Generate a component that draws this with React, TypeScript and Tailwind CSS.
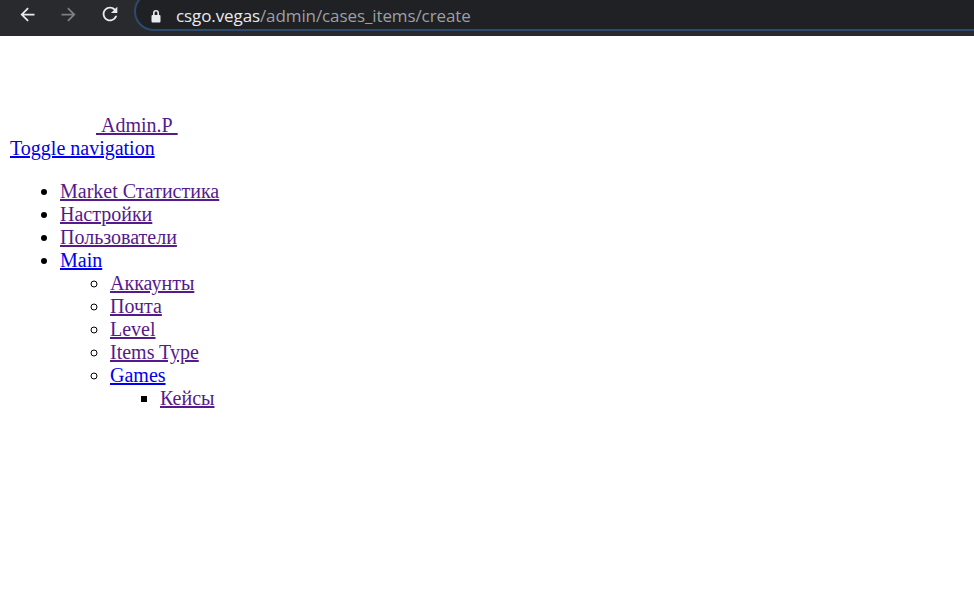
import React from "react";

const serif = { fontFamily: '"Liberation Serif", "Times New Roman", serif' };

function Visited({ children }: { children: React.ReactNode }) {
  return (
    <a href="#" className="text-[#551a8b] underline">
      {children}
    </a>
  );
}
function Link({ children }: { children: React.ReactNode }) {
  return (
    <a href="#" className="text-[#0000ee] underline">
      {children}
    </a>
  );
}

export default function App() {
  return (
    <div className="w-[974px] h-[600px] bg-white overflow-hidden">
      {/* browser toolbar */}
      <div className="relative h-[36px] bg-[#292a2d] flex items-start overflow-hidden">
        <div className="flex items-center h-[28px] pl-[17px] gap-[20px]">
          <svg width="21" height="21" viewBox="0 0 24 24" fill="#e8eaed">
            <path d="M20 11H7.83l5.59-5.59L12 4l-8 8 8 8 1.41-1.41L7.83 13H20v-2z" />
          </svg>
          <svg width="21" height="21" viewBox="0 0 24 24" fill="#7c7f83">
            <path d="M4 11h12.17l-5.59-5.59L12 4l8 8-8 8-1.41-1.41L16.17 13H4v-2z" />
          </svg>
          <svg width="22" height="22" viewBox="0 0 24 24" fill="#e8eaed">
            <path d="M17.65 6.35C16.2 4.9 14.21 4 12 4c-4.42 0-7.99 3.58-7.99 8s3.57 8 7.99 8c3.73 0 6.84-2.55 7.73-6h-2.08c-.82 2.33-3.04 4-5.65 4-3.31 0-6-2.69-6-6s2.69-6 6-6c1.66 0 3.14.69 4.22 1.78L13 11h7V4l-2.35 2.35z" />
          </svg>
        </div>
        <div className="absolute left-[134px] top-[-8px] right-[-40px] h-[39px] rounded-full bg-[#202124] border-2 border-[#2c4a6e] flex items-center pl-[14px] pt-[8px]">
          <svg width="12" height="14" viewBox="0 0 12 14" fill="#e8eaed">
            <path d="M3 6V4a3 3 0 0 1 6 0v2h-1.6V4a1.4 1.4 0 0 0-2.8 0v2z" />
            <rect x="1.5" y="6" width="9" height="7.5" rx="1" />
          </svg>
          <span
            className="ml-[14px] text-[17px] leading-[22px] tracking-[-0.1px]"
            style={{ fontFamily: '"Open Sans", "Noto Sans", sans-serif' }}
          >
            <span className="text-[#e8eaed]">csgo.vegas</span>
            <span className="text-[#9aa0a6]">/admin/cases_items/create</span>
          </span>
        </div>
      </div>

      {/* page */}
      <div className="px-[10px] pt-[78px] text-[20px] leading-[23px] text-black" style={serif}>
        <div className="pl-[86px]">
          <Visited>{"\u00a0Admin.P\u00a0"}</Visited>
        </div>
        <div>
          <Link>Toggle navigation</Link>
        </div>
        <ul className="list-disc pl-[50px] mt-[20px]">
          <li>
            <Visited>Market Статистика</Visited>
          </li>
          <li>
            <Visited>Настройки</Visited>
          </li>
          <li>
            <Visited>Пользователи</Visited>
          </li>
          <li>
            <Link>Main</Link>
            <ul className="list-[circle] pl-[50px]">
              <li>
                <Visited>Аккаунты</Visited>
              </li>
              <li>
                <Visited>Почта</Visited>
              </li>
              <li>
                <Visited>Level</Visited>
              </li>
              <li>
                <Visited>Items Type</Visited>
              </li>
              <li>
                <Link>Games</Link>
                <ul className="list-[square] pl-[50px]">
                  <li>
                    <Visited>Кейсы</Visited>
                  </li>
                </ul>
              </li>
            </ul>
          </li>
        </ul>
      </div>
    </div>
  );
}
